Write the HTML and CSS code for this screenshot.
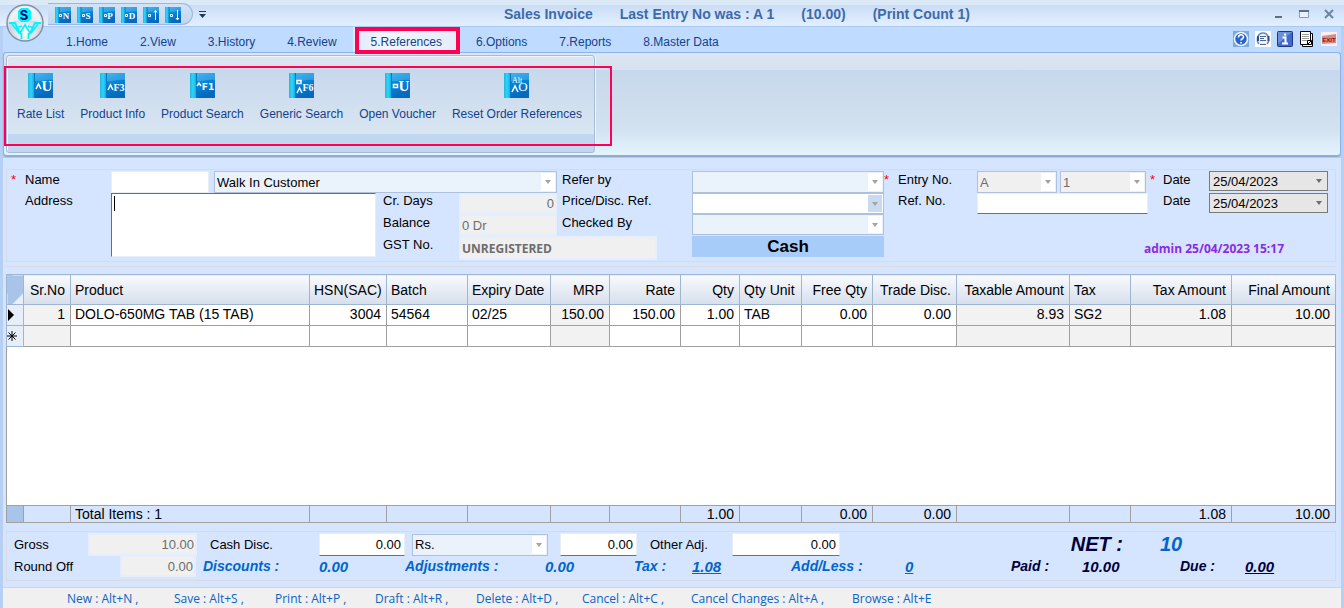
FILE: index.html
```html
<!DOCTYPE html>
<html lang="en">
  <head>
    <meta charset="UTF-8">
    <title>Sales Invoice</title>
    <meta name="viewport" content="width=device-width,initial-scale=1">
    <link rel="stylesheet" href="styles.css">
  </head>

  <body>
    <!-- shared icon parts -->
    <svg class="defs" width="0" height="0" aria-hidden="true">
      <defs>
        <linearGradient id="cover" x1="0" y1="0" x2="0.4" y2="1">
          <stop offset="0" stop-color="#2aa9e4" />
          <stop offset="0.35" stop-color="#0590e2" />
          <stop offset="1" stop-color="#0569be" />
        </linearGradient>
        <linearGradient id="spine" x1="0" y1="0" x2="1" y2="0">
          <stop offset="0" stop-color="#25b4df" />
          <stop offset="0.5" stop-color="#2ed6f6" />
          <stop offset="1" stop-color="#12b0ea" />
        </linearGradient>
        <radialGradient id="orb" cx="0.5" cy="0.75" r="0.75">
          <stop offset="0" stop-color="#ffffff" />
          <stop offset="0.55" stop-color="#cfd6df" />
          <stop offset="1" stop-color="#eef2f6" />
        </radialGradient>
        <symbol id="book" viewBox="0 0 25 25">
          <rect x="0" y="0" width="25" height="25" fill="url(#cover)" />
          <path d="M7 0h18v7C17 6 12 9 7 8z" fill="#fff" opacity="0.18" />
          <rect x="0" y="0" width="6" height="25" fill="url(#spine)" />
          <path d="M6.500 0v25" stroke="#0878c4" />
        </symbol>
      </defs>
    </svg>

    <header>
      <div class="titlebar">
        <button class="orb" aria-label="Application menu">
          <svg width="38" height="38" viewBox="0 0 38 38">
            <circle cx="19" cy="19" r="18" fill="url(#orb)" stroke="#8391a5" stroke-width="1.500" />
            <path d="M3 19a16 16 0 0 1 32 0c-9-4-23-4-32 0z" fill="#fff" opacity="0.5" />
            <path d="M15 4h7l3 3v8l-3 3h-7l-3-3V7z" fill="#00f6ff" />
            <text x="18" y="16" class="orb-letter">S</text>
            <path d="M3 19h6l5 10 5-8 5 8 5-10h6M6 20l7 9 3 1M32 20l-7 9-3 1M10 24l6-2M28 24l-6-2M15.500 29v6M22.500 29v6" fill="none" stroke="#00f6ff" stroke-width="1.800" />
          </svg>
        </button>
        <div class="quick">
          <button aria-label="New"><svg width="16" height="16"><use href="#book" /><path d="M4.500 7.500h2v2h-2z" /><text x="11" y="12">N</text></svg></button>
          <button aria-label="Save"><svg width="16" height="16"><use href="#book" /><path d="M5.500 7.500h2v2h-2z" /><text x="11" y="12">S</text></svg></button>
          <button aria-label="Print"><svg width="16" height="16"><use href="#book" /><path d="M5.500 7.500h2v2h-2z" /><text x="11" y="12">P</text></svg></button>
          <button aria-label="Draft"><svg width="16" height="16"><use href="#book" /><path d="M4.500 7.500h2v2h-2z" /><text x="11" y="12">D</text></svg></button>
          <button aria-label="Previous"><svg width="16" height="16"><use href="#book" /><path d="M5.500 7.500h2v2h-2zM12.500 13V4M11 5.500l1.500-2 1.500 2" /></svg></button>
          <button aria-label="Next"><svg width="16" height="16"><use href="#book" /><path d="M5.500 7.500h2v2h-2zM12.500 3v9M11 11l1.500 2 1.500-2" /></svg></button>
        </div>
        <button class="quick-more" aria-label="Customize toolbar">
          <svg width="7" height="7"><path d="M0 0.500h7" stroke="#1e395b" /><path d="M0 3h7l-3.500 4z" fill="#1e395b" /></svg>
        </button>
        <h1>
          <span>Sales Invoice</span>
          <span>Last Entry No was : A 1</span>
          <span>(10.00)</span>
          <span>(Print Count 1)</span>
        </h1>
        <div class="window-buttons">
          <button aria-label="Minimize"><svg width="10" height="10"><path d="M1 8h7" stroke="#5c6f86" stroke-width="2" /></svg></button>
          <button aria-label="Maximize"><svg width="10" height="10"><path d="M0.500 1.500h9v7h-9z" fill="#e8f1fc" stroke="#86a0c2" /><path d="M0 2h10" stroke="#5c6f86" stroke-width="2" /></svg></button>
          <button aria-label="Close"><svg width="10" height="10"><path d="M1 1l8 8M9 1L1 9" stroke="#6d84a3" stroke-width="2" /></svg></button>
        </div>
      </div>

      <div class="tab-row">
        <nav>
          <button>1.Home</button>
          <button>2.View</button>
          <button>3.History</button>
          <button>4.Review</button>
          <button class="active">5.References</button>
          <button>6.Options</button>
          <button>7.Reports</button>
          <button>8.Master Data</button>
        </nav>
        <div class="tools">
          <button aria-label="Help"><svg width="16" height="16"><rect width="16" height="16" fill="#7ea9d4" /><circle cx="8" cy="8" r="6.500" fill="#2a63cf" stroke="#eef5ff" stroke-width="1.500" /><path d="M5.500 6.500c0-3.500 5-3.500 5-0.500 0 2-2.500 1.500-2.500 3.500M8 11v1.500" fill="none" stroke="#fff" stroke-width="1.600" /></svg></button>
          <button aria-label="Support"><svg width="16" height="16"><rect width="16" height="16" fill="#fff" /><path d="M4 13C1 10 2 2 8 2s7 8 4 11" fill="#eef3fb" stroke="#6387bd" stroke-width="1.500" /><path d="M3 5v5M13.500 5v5" stroke="#2c4f8c" stroke-width="2" /><path d="M5 5.500h6M5 7.500h4M5 9.500h6M5 13.500h6" stroke="#4a668f" /></svg></button>
          <button aria-label="Information"><svg width="16" height="16"><rect x="0.500" y="0.500" width="15" height="15" rx="1" fill="#3f6cc9" stroke="#20358e" /><path d="M1 1h14L1 13z" fill="#8ba9e4" opacity="0.600" /><path d="M5.500 6.500H8.500V12M5 12.500h6M7 3.500h2" fill="none" stroke="#fff" stroke-width="2" /></svg></button>
          <button aria-label="Notes"><svg width="16" height="16"><path d="M3.500 2.500h10v13h-10z" fill="#fff" stroke="#000" /><path d="M1.500 0.500h10v13h-10z" fill="#fff" stroke="#000" /><path d="M3 3.500h7M3 5.500h7M3 7.500h7M3 9.500h5" stroke="#9b9b9b" /><path d="M8.500 9.500h4v4h-4zM9 13l3-3" fill="#fff" stroke="#000" /></svg></button>
          <button aria-label="Exit"><svg width="16" height="16"><rect y="1" width="16" height="14" fill="#fbeeee" /><path d="M1 5l14-2v9L1 13z" fill="#d98b88" /><text x="8" y="11" class="exit">EXIT</text></svg></button>
        </div>
      </div>

      <div class="ribbon">
        <div class="ribbon-group">
          <button><svg width="25" height="25"><use href="#book" /><path d="M8 16l2.500-5 2.500 5" /><text x="19" y="18" class="big">U</text></svg>Rate List</button>
          <button><svg width="25" height="25"><use href="#book" /><path d="M8 17l2.500-5 2.500 5" /><text x="19" y="18">F3</text></svg>Product Info</button>
          <button><svg width="25" height="25"><use href="#book" /><path d="M7 13l2-3 2 3" /><text x="18" y="17" class="sans">F1</text></svg>Product Search</button>
          <button><svg width="25" height="25"><use href="#book" /><path d="M8 7.500h4v3H8zM8 20l2.500-5 2.500 5" /><text x="19" y="18">F6</text></svg>Generic Search</button>
          <button><svg width="25" height="25"><use href="#book" /><path d="M8.500 11.500h4v3h-4z" /><text x="19" y="18" class="big">U</text></svg>Open Voucher</button>
          <button><svg width="25" height="25"><use href="#book" /><path d="M8 19l3-6 3 6" /><text x="13" y="10" class="small">Alt</text><text x="19" y="18" class="thin">O</text></svg>Reset Order References</button>
        </div>
        <div class="marker"></div>
      </div>
    </header>

    <main>
      <form class="panel invoice">
        <span class="star">*</span>
        <label class="l-name" for="code">Name</label>
        <input class="code" id="code" type="text">
        <div class="combo customer"><select aria-label="Customer"><option>Walk In Customer</option></select></div>
        <label class="l-address" for="address">Address</label>
        <div class="address"><textarea id="address"></textarea><i class="caret"></i></div>

        <label class="l-days" for="days">Cr. Days</label>
        <input class="days locked num" id="days" type="text" value="0" readonly>
        <label class="l-balance" for="balance">Balance</label>
        <input class="balance locked" id="balance" type="text" value="0 Dr" readonly>
        <label class="l-gst" for="gst">GST No.</label>
        <input class="gst locked" id="gst" type="text" value="UNREGISTERED" readonly>

        <label class="l-refer" for="refer">Refer by</label>
        <div class="combo refer"><select id="refer"><option></option></select></div>
        <label class="l-price" for="price">Price/Disc. Ref.</label>
        <div class="combo price"><select id="price"><option></option></select></div>
        <label class="l-checked" for="checked">Checked By</label>
        <div class="combo checked"><select id="checked"><option></option></select></div>
        <strong class="cash">Cash</strong>

        <span class="star entry-star">*</span>
        <label class="l-entry" for="series">Entry No.</label>
        <div class="combo grey series"><select id="series"><option>A</option></select></div>
        <div class="combo grey number"><select aria-label="Entry number"><option>1</option></select></div>
        <label class="l-ref" for="ref">Ref. No.</label>
        <input class="ref lined" id="ref" type="text">

        <span class="star date-star">*</span>
        <label class="l-date" for="date1">Date</label>
        <div class="combo date date1"><input id="date1" type="text" value="25/04/2023"></div>
        <label class="l-date2" for="date2">Date</label>
        <div class="combo date date2"><input id="date2" type="text" value="25/04/2023"></div>
        <span class="user">admin 25/04/2023 15:17</span>
      </form>

      <section class="items">
        <table>
          <colgroup>
            <col class="w17"><col class="w47"><col><col class="w77"><col class="w81"><col class="w83">
            <col class="w59"><col class="w71"><col class="w59"><col class="w62"><col class="w71"><col class="w84">
            <col class="w113"><col class="w61"><col class="w101"><col class="w104">
          </colgroup>
          <thead>
            <tr>
              <th class="corner"></th>
              <th class="num">Sr.No</th>
              <th>Product</th>
              <th class="num">HSN(SAC)</th>
              <th>Batch</th>
              <th>Expiry Date</th>
              <th class="num">MRP</th>
              <th class="num">Rate</th>
              <th class="num">Qty</th>
              <th>Qty Unit</th>
              <th class="num">Free Qty</th>
              <th class="num">Trade Disc.</th>
              <th class="num">Taxable Amount</th>
              <th>Tax</th>
              <th class="num">Tax Amount</th>
              <th class="num">Final Amount</th>
            </tr>
          </thead>
          <tbody>
            <tr>
              <td class="rowhead"><svg width="8" height="12"><path d="M1 0l6 6-6 6z" /></svg></td>
              <td class="num dim">1</td>
              <td>DOLO-650MG TAB (15 TAB)</td>
              <td class="num">3004</td>
              <td>54564</td>
              <td>02/25</td>
              <td class="num dim">150.00</td>
              <td class="num">150.00</td>
              <td class="num">1.00</td>
              <td>TAB</td>
              <td class="num">0.00</td>
              <td class="num">0.00</td>
              <td class="num dim">8.93</td>
              <td class="dim">SG2</td>
              <td class="num dim">1.08</td>
              <td class="num dim">10.00</td>
            </tr>
            <tr>
              <td class="rowhead"><svg width="10" height="10"><path d="M5 0v10M0 5h10M1.500 1.500l7 7M8.500 1.500l-7 7" stroke="#000" /></svg></td>
              <td class="dim"></td>
              <td></td>
              <td></td>
              <td></td>
              <td></td>
              <td class="dim"></td>
              <td></td>
              <td></td>
              <td></td>
              <td></td>
              <td></td>
              <td class="dim"></td>
              <td class="dim"></td>
              <td class="dim"></td>
              <td class="dim"></td>
            </tr>
            <tr class="filler"><td colspan="16"></td></tr>
          </tbody>
          <tfoot>
            <tr>
              <td class="corner-foot"></td>
              <td></td>
              <td>Total Items : 1</td>
              <td></td>
              <td></td>
              <td></td>
              <td></td>
              <td></td>
              <td class="num">1.00</td>
              <td></td>
              <td class="num">0.00</td>
              <td class="num">0.00</td>
              <td></td>
              <td></td>
              <td class="num">1.08</td>
              <td class="num">10.00</td>
            </tr>
          </tfoot>
        </table>
      </section>

      <section class="panel totals">
        <div class="row1">
          <label for="gross">Gross</label>
          <input class="locked num" id="gross" type="text" value="10.00" readonly>
          <label class="inset" for="disc">Cash Disc.</label>
          <input class="lined num" id="disc" type="text" value="0.00">
          <div class="combo unit"><select aria-label="Discount unit"><option>Rs.</option></select></div>
          <input class="lined num" type="text" value="0.00" aria-label="Discount amount">
          <label class="inset" for="adj">Other Adj.</label>
          <input class="lined num" id="adj" type="text" value="0.00">
          <b class="net">NET :</b>
          <b class="net blue">10</b>
        </div>
        <div class="row2">
          <label for="round">Round Off</label>
          <input class="locked num round" id="round" type="text" value="0.00" readonly>
          <b class="blue">Discounts :</b>
          <b class="blue value">0.00</b>
          <b class="blue">Adjustments :</b>
          <b class="blue value">0.00</b>
          <b class="blue">Tax :</b>
          <a class="blue value" href="#">1.08</a>
          <b class="blue">Add/Less :</b>
          <a class="blue value" href="#">0</a>
          <b>Paid :</b>
          <b class="value">10.00</b>
          <b>Due :</b>
          <a class="value" href="#">0.00</a>
        </div>
      </section>
    </main>

    <footer>
      <span>New : Alt+N ,</span>
      <span>Save : Alt+S ,</span>
      <span>Print : Alt+P ,</span>
      <span>Draft : Alt+R ,</span>
      <span>Delete : Alt+D ,</span>
      <span>Cancel : Alt+C ,</span>
      <span>Cancel Changes : Alt+A ,</span>
      <span>Browse : Alt+E</span>
    </footer>
  </body>

</html>
```
FILE: styles.css
```css
* {
  box-sizing: border-box;
}

body {
  margin: 0;
  min-height: 100vh;
  display: flex;
  flex-direction: column;
  background: #b5cff5;
  font-family: "Liberation Sans", Arial, sans-serif;
  font-size: 13px;
  color: #000;
}

button {
  padding: 0;
  border: 0;
  background: none;
  font: inherit;
  color: inherit;
}

svg {
  display: block;
}

.defs {
  position: absolute;
}

/* title bar */

.titlebar {
  position: relative;
  display: flex;
  align-items: center;
  height: 27px;
  padding: 2px 0 0 48px;
  border-bottom: 1px solid #abc8f2;
  background: linear-gradient(#dce9f6 0, #dce9f6 5px, #c9ddf8 5px, #e4effd 100%);
}

.orb {
  position: absolute;
  top: 4px;
  left: 6px;
  z-index: 2;
}

.orb-letter {
  font: bold 14px "Liberation Mono", monospace;
  fill: #00007c;
  text-anchor: middle;
}

.quick {
  display: flex;
  gap: 6px;
  height: 22px;
  padding: 2px 11px 0 7px;
  border: 1px solid #9db7dc;
  border-left: 0;
  border-radius: 0 11px 11px 0;
  background: linear-gradient(#d3e2f6, #c3d7f0);
}

.quick text {
  font: bold 9px "Liberation Serif", serif;
  fill: #fff;
  text-anchor: middle;
}

.quick path {
  fill: none;
  stroke: #fff;
}

.quick-more {
  margin-left: 6px;
}

h1 {
  position: absolute;
  left: 504px;
  display: flex;
  gap: 27px;
  margin: 0;
  font-size: 14px;
  line-height: 26px;
  color: #3e6aaa;
  white-space: nowrap;
}

.window-buttons {
  display: flex;
  gap: 15px;
  margin-left: auto;
  padding-right: 10px;
}

/* tabs */

.tab-row {
  display: flex;
  justify-content: space-between;
  height: 25px;
  margin: 0 3px;
  padding-left: 47px;
  background: #bfdbff;
  color: #15428b;
}

nav {
  display: flex;
  font-size: 12px;
}

nav button {
  padding: 4px 16px 0;
}

nav .active {
  position: relative;
  padding: 4px 18px 0;
  background: linear-gradient(to right, #dfebfa, #f1f6fd 30%, #e3edfa);
}

nav .active::after {
  content: "";
  position: absolute;
  top: 0;
  left: 2px;
  right: 0;
  bottom: -2px;
  border: 4px solid #ff0055;
  z-index: 1;
}

.tools {
  display: flex;
  gap: 6px;
  padding: 4px 4px 0 0;
  align-items: flex-start;
}

.exit {
  font: bold 6px "Liberation Sans", sans-serif;
  fill: #8c1515;
  text-anchor: middle;
}

/* ribbon */

.ribbon {
  position: relative;
  height: 104px;
  margin: 0 3px 2px;
  padding: 2px;
  border: 1px solid #8db2e8;
  border-bottom: 1px solid #8fb0c8;
  border-radius: 4px;
  background: linear-gradient(#dce7f3 0, #d5e1ee 17px, #c7d8ec 17px, #d2e1ef 75px, #e3f4fe 100%);
  box-shadow: 0 1px 1px #8ba6cc;
}

.ribbon-group {
  display: inline-flex;
  gap: 16px;
  align-items: flex-start;
  height: 98px;
  padding: 17px 12px 0 10px;
  border: 1px solid #a3bcd8;
  border-radius: 3px;
  background: linear-gradient(#dde7f3 0, #d6e1ee 13px, #c8d8ec 13px, #d8e5f2 78px, #c1d7f1 78px);
  box-shadow: inset 1px 1px 0 #eef4fb, 1px 0 0 #eef4fb;
}

.ribbon-group button {
  display: flex;
  flex-direction: column;
  align-items: center;
  gap: 9px;
  font-size: 12px;
  line-height: 14px;
  color: #15428b;
}

.ribbon-group path {
  fill: none;
  stroke: #fff;
  stroke-width: 1.5;
}

.ribbon-group text {
  font: bold 10px "Liberation Serif", serif;
  fill: #fff;
  text-anchor: middle;
}

.ribbon-group .big {
  font-size: 15px;
}

.ribbon-group .sans {
  font: bold 9px "DejaVu Sans", sans-serif;
}

.ribbon-group .small {
  font-size: 8px;
  font-weight: normal;
}

.ribbon-group .thin {
  font-size: 13px;
  font-weight: normal;
}

.marker {
  position: absolute;
  top: 13px;
  left: 0;
  width: 608px;
  height: 80px;
  border: 2px solid #ff0055;
}

/* work area */

main {
  flex: 1;
  display: flex;
  flex-direction: column;
  margin: 0 3px;
  padding: 11px 5px 6px 3px;
  background: #d5e5ff;
}

.panel {
  border: 1px solid #d8dce2;
}

input,
select,
textarea {
  display: block;
  width: 100%;
  min-width: 0;
  height: 100%;
  margin: 0;
  padding: 0 3px;
  border: 1px solid #e8eef6;
  border-radius: 0;
  outline: 0;
  background: #fff;
  font: inherit;
  color: #000;
  appearance: none;
  resize: none;
}

.num {
  text-align: right;
}

.locked {
  border: 2px solid #e6eefb;
  padding: 0 1px;
  background: #f0f0f0;
  color: #6d6d6d;
}

.lined {
  border-bottom-color: #707070;
}

.combo {
  position: relative;
}

.combo select {
  padding: 0 2px;
  border-color: #abc1de;
  background: #eaf2fb;
}

.combo::after {
  content: "";
  position: absolute;
  top: 2px;
  right: 2px;
  bottom: 2px;
  width: 14px;
  background: #fff;
  pointer-events: none;
}

.combo::before {
  content: "";
  position: absolute;
  top: 50%;
  right: 6px;
  z-index: 1;
  margin-top: -2px;
  border: 3px solid transparent;
  border-top: 4px solid #a3a3a3;
  border-bottom: 0;
  pointer-events: none;
}

.combo.grey select {
  background: #f0f0f0;
  color: #6d6d6d;
}

.combo.date input {
  border-color: #7a7a7a;
  background: #e6e6e6;
}

.combo.date::after {
  display: none;
}

.combo.date::before {
  border-top-color: #6d6d6d;
}

/* invoice head */

.invoice {
  display: grid;
  grid-template-columns: 18px 86px 103px minmax(160px, 1fr) 76px 103px 130px 192px 14px 79px 83px 90px 13px 46px 119px;
  grid-template-rows: 22px 21px 22px 24px;
  padding: 1px 7px 1px 0;
}

.invoice label {
  line-height: 18px;
}

.star {
  padding-left: 4px;
  line-height: 18px;
  color: #f00;
}

.l-name {
  grid-area: 1 / 2;
}

.code {
  grid-area: 1 / 3;
  width: 98px;
}

.customer {
  grid-area: 1 / 4 / 2 / 7;
  margin-right: 5px;
}

.l-address {
  grid-area: 2 / 2;
}

.invoice .l-address,
.invoice .l-days,
.invoice .l-price,
.invoice .l-ref,
.invoice .l-date2 {
  line-height: 16px;
}

.address {
  grid-area: 2 / 3 / 5 / 5;
  position: relative;
  margin: 0 7px 3px 0;
}

.address textarea {
  border-top-color: #6d6d6d;
  border-left-color: #6d6d6d;
}

.caret {
  position: absolute;
  top: 3px;
  left: 3px;
  width: 1px;
  height: 15px;
  background: #000;
}

.l-days {
  grid-area: 2 / 5;
}

.days {
  grid-area: 2 / 6;
  width: 98px;
}

.l-balance {
  grid-area: 3 / 5;
}

.balance {
  grid-area: 3 / 6;
  width: 98px;
}

.l-gst {
  grid-area: 4 / 5;
}

.gst {
  grid-area: 4 / 6 / 5 / 8;
  width: 198px;
  font: bold 12px "Open Sans", sans-serif;
}

.l-refer {
  grid-area: 1 / 7;
}

.refer {
  grid-area: 1 / 8;
}

.l-price {
  grid-area: 2 / 7;
}

.price {
  grid-area: 2 / 8;
}

.price select {
  background: #fff;
}

.price::after {
  background: #c9dbf0;
}

.l-checked {
  grid-area: 3 / 7;
}

.checked {
  grid-area: 3 / 8;
  margin-bottom: 1px;
}

.cash {
  grid-area: 4 / 8;
  margin-bottom: 3px;
  background: #a7ccfa;
  font-size: 17px;
  line-height: 21px;
  text-align: center;
}

.entry-star {
  grid-area: 1 / 9;
  padding-left: 0;
}

.l-entry {
  grid-area: 1 / 10;
}

.series {
  grid-area: 1 / 11;
  margin-right: 3px;
}

.number {
  grid-area: 1 / 12;
  margin-right: 4px;
}

.l-ref {
  grid-area: 2 / 10;
}

.ref {
  grid-area: 2 / 11 / 3 / 13;
  width: 171px;
}

.date-star {
  grid-area: 1 / 13;
  padding-left: 0;
}

.l-date {
  grid-area: 1 / 14;
}

.date1 {
  grid-area: 1 / 15;
  margin-bottom: 2px;
}

.l-date2 {
  grid-area: 2 / 14;
}

.date2 {
  grid-area: 2 / 15;
  margin-bottom: 1px;
}

.user {
  grid-area: 4 / 12 / 5 / 16;
  justify-self: end;
  padding-right: 44px;
  font: bold 12px/26px "Open Sans", sans-serif;
  color: #8a2be2;
}

/* item grid */

.items {
  flex: 1;
  display: grid;
  margin-top: 4px;
  padding-top: 7px;
  border-top: 1px solid #d8dce2;
}

table {
  width: 100%;
  border-collapse: collapse;
  table-layout: fixed;
  background: #fff;
  font-size: 14px;
}

.w17 { width: 17px; }
.w47 { width: 47px; }
.w59 { width: 59px; }
.w61 { width: 61px; }
.w62 { width: 62px; }
.w71 { width: 71px; }
.w77 { width: 77px; }
.w81 { width: 81px; }
.w83 { width: 83px; }
.w84 { width: 84px; }
.w101 { width: 101px; }
.w104 { width: 104px; }
.w113 { width: 113px; }

th,
td {
  height: 21px;
  padding: 0 5px 0 4px;
  border: 1px solid #a0a0a0;
  line-height: 16px;
  text-align: left;
  white-space: nowrap;
}

tbody td {
  padding-bottom: 2px;
}

th {
  height: 30px;
  border-color: #9eb6d4;
  background: linear-gradient(#f8fafd, #d6dfed);
  font-weight: normal;
}

th.num,
td.num {
  text-align: right;
}

th.corner {
  background: linear-gradient(135deg, #a9c4e9 75%, #e8eff8 75%);
}

td.rowhead {
  padding: 0;
  border-color: #9eb6d4;
  background: #e6eff9;
}

td.dim {
  background: #f2f2f2;
}

.filler td {
  height: auto;
}

tfoot td {
  height: 17px;
  background: #d5e5ff;
  line-height: 15px;
}

tfoot .corner-foot {
  background: #a9c4e9;
}

/* totals */

.totals {
  margin-top: 8px;
  padding: 1px 0 3px 7px;
}

.row1,
.row2 {
  display: grid;
  height: 22px;
  align-items: center;
}

.row1 {
  grid-template-columns: 74px 109px 122px 93px 148px 77px 95px 108px 1fr 212px;
}

.row1 #disc {
  width: 86px;
}

.unit {
  height: 22px;
  margin-right: 12px;
}

.inset {
  padding-left: 13px;
}

.row2 {
  grid-template-columns: 106px 83px 116px 86px 140px 89px 58px 99px 114px 106px 71px 98px 65px 1fr;
}

.row2 .round {
  width: 76px;
}

.totals b,
.totals a {
  font-size: 14px;
  font-style: italic;
  font-weight: bold;
  color: #00003c;
}

.totals .value {
  font-size: 15px;
}

.totals .net {
  font-size: 20px;
}

.row1 .net {
  text-align: right;
}

.row1 .net.blue {
  padding-left: 37px;
  text-align: left;
}

.totals .blue {
  color: #0066cc;
}

/* shortcut bar */

footer {
  display: grid;
  grid-template-columns: 107px 101px 100px 101px 106px 109px 161px 1fr;
  height: 21px;
  margin: 0 3px;
  padding-left: 64px;
  border-top: 1px solid #d0d5dc;
  background: #f0f0f0;
  font: 12px/22px "Open Sans", sans-serif;
  color: #0b63c5;
  white-space: nowrap;
}
```
